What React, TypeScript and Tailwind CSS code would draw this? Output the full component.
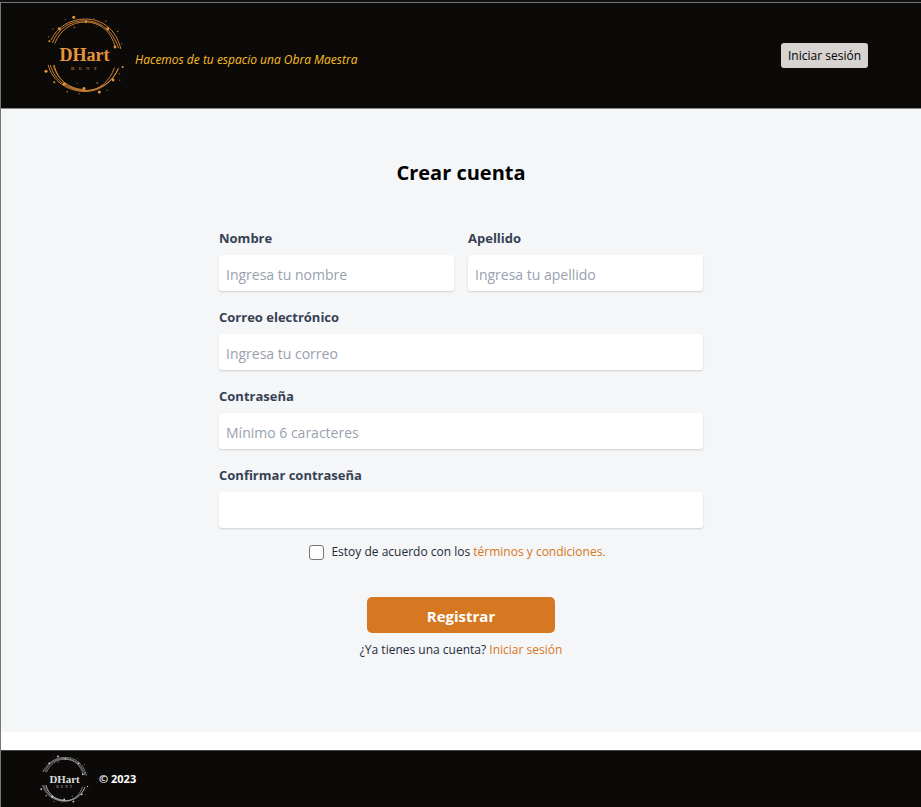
import React from "react";

const SANS = "font-['Open_Sans','Noto_Sans',sans-serif]";

const DOTS: [number, number, number][] = [
  [29.7, 2.3, 1.5], [15.3, 13.7, 1.5], [42, 6.7, 1.2], [30.3, 12.3, 0.9],
  [21.3, 4.3, 0.6], [50, 3.3, 0.6], [61.7, 6.3, 0.8], [63.7, 13.7, 1.5],
  [73.7, 16.3, 0.9], [71, 32, 1.4], [77.7, 29, 0.7], [5.3, 26.3, 1],
  [4.7, 21.7, 0.7], [8.7, 14, 0.7], [2, 56.3, 1.5], [78.7, 52, 1],
  [10.3, 67.3, 1], [20.3, 69, 1.6], [23.3, 76.7, 0.9], [33.3, 68.3, 0.6],
  [40, 73.3, 1.4], [53.3, 68, 0.9], [55.3, 77, 1.5], [63.3, 75.3, 0.7],
  [35.3, 78.7, 0.7], [69, 65, 1.4], [75.3, 58.7, 0.7], [75.7, 65.3, 0.7],
];

function Logo({ className }: { className: string }) {
  return (
    <svg viewBox="0 0 81 81" className={className} role="img" aria-label="DHart Rent" fill="none">
      <g stroke="currentColor" strokeWidth="1" strokeLinecap="round" opacity="0.85">
        <path d="M7 25C13 12 26 4 41 4C58 4 72 14 76.7 33.5" />
        <path d="M8.5 27.5C14 13 27 5.5 41 5.8C57 6 69 16 74.5 33" />
        <path d="M11 28C16 15 28 7 41 7C56 7 68 17 71 32" />
        <path d="M4.3 50.3C8 66 24 76.5 41 76.5C56 76.5 69 67 74.5 53.5" />
        <path d="M6.5 50.5C11 67 26 75.5 41 75.5C57 75.5 69 66 74 54" />
        <path d="M10.3 50.3C13 65 27 75.8 42 75.8C55 75.8 66 66 70.3 53" />
        <path d="M9.5 51C14 67 28 74.6 41 74.6" />
      </g>
      {DOTS.map(([x, y, r], i) => (
        <circle key={i} cx={x} cy={y} r={r} fill="currentColor" opacity={r < 1 ? 0.6 : 1} />
      ))}
      <text
        x="40.5"
        y="46"
        textAnchor="middle"
        fill="currentColor"
        className="font-['Liberation_Serif',serif] text-[18px] font-bold"
      >
        DHart
      </text>
      <text
        x="42"
        y="55"
        textAnchor="middle"
        fill="currentColor"
        opacity="0.65"
        className="font-['Liberation_Serif',serif] text-[5px] font-bold tracking-[4px]"
      >
        RENT
      </text>
    </svg>
  );
}

function Field({ id, label, type = "text", placeholder }: { id: string; label: string; type?: string; placeholder?: string }) {
  return (
    <div className="flex min-w-0 flex-1 flex-col gap-[7px]">
      <label htmlFor={id} className="text-[13px] leading-5 font-bold text-gray-700">
        {label}
      </label>
      <input
        id={id}
        type={type}
        placeholder={placeholder}
        className="h-9 w-full rounded-[3px] bg-white px-[7px] pt-[2px] text-sm text-gray-700 shadow-[0_1px_2px_rgba(0,0,0,0.16)] placeholder:text-gray-400 focus:outline-none"
      />
    </div>
  );
}

export default function App() {
  return (
    <div className={`${SANS} border-t-2 border-[#11100e] bg-white`}>
      <div className="flex min-h-[calc(100vh-2px)] flex-col border-t border-l border-[#777777]">
        <header className="flex items-center justify-between border-b border-[#8a8886] bg-[#0c0a09] pt-3 pr-[53px] pb-3 pl-[43px]">
          <div className="flex items-center gap-[10px]">
            <Logo className="size-[81px] text-[#e8943a]" />
            <p className="pt-2 text-xs leading-5 text-[#fbbf24] italic">Hacemos de tu espacio una Obra Maestra</p>
          </div>
          <button type="button" className="h-[25px] rounded-[3px] bg-[#d6d3d1] px-[7px] text-xs text-black">
            Iniciar sesión
          </button>
        </header>

        <main className="flex flex-col items-center bg-[#f4f6f8] px-4 pt-12 pb-[74px]">
          <h1 className="text-xl leading-8 font-bold text-black">Crear cuenta</h1>
          <form className="mt-[39px] flex w-full max-w-[484px] flex-col gap-4" onSubmit={(e) => e.preventDefault()}>
            <div className="flex gap-[14px]">
              <Field id="nombre" label="Nombre" placeholder="Ingresa tu nombre" />
              <Field id="apellido" label="Apellido" placeholder="Ingresa tu apellido" />
            </div>
            <Field id="correo" label="Correo electrónico" type="email" placeholder="Ingresa tu correo" />
            <Field id="clave" label="Contraseña" type="password" placeholder="Mínimo 6 caracteres" />
            <Field id="confirmar" label="Confirmar contraseña" type="password" />
            <div className="flex flex-col items-center">
              <div className="flex items-center gap-[7px] pr-[7px] text-xs leading-4 text-gray-800">
                <input
                  id="acuerdo"
                  type="checkbox"
                  className="size-[15px] appearance-none rounded-[3px] border border-[#767676] bg-white checked:bg-[#d97706]"
                />
                <label htmlFor="acuerdo">
                  Estoy de acuerdo con los{" "}
                  <a href="#terminos" className="font-medium text-[#d67721]">
                    términos y condiciones.
                  </a>
                </label>
              </div>
              <button type="submit" className="mt-[37px] h-9 w-[188px] rounded-[5px] bg-[#d67721] pt-[2px] text-[15px] leading-5 font-bold text-white">
                Registrar
              </button>
              <p className="mt-[9px] text-xs leading-4 text-gray-800">
                ¿Ya tienes una cuenta?{" "}
                <a href="#iniciar" className="font-medium text-[#d67721]">
                  Iniciar sesión
                </a>
              </p>
            </div>
          </form>
        </main>

        <footer className="mt-[18px] flex flex-1 items-center gap-[10px] border-t border-[#444444] bg-[#0c0a09] py-[3px] pl-[39px]">
          <Logo className="size-[49px] text-[#dddddd]" />
          <p className="text-[11px] leading-4 font-bold text-white">© 2023</p>
        </footer>
      </div>
    </div>
  );
}
